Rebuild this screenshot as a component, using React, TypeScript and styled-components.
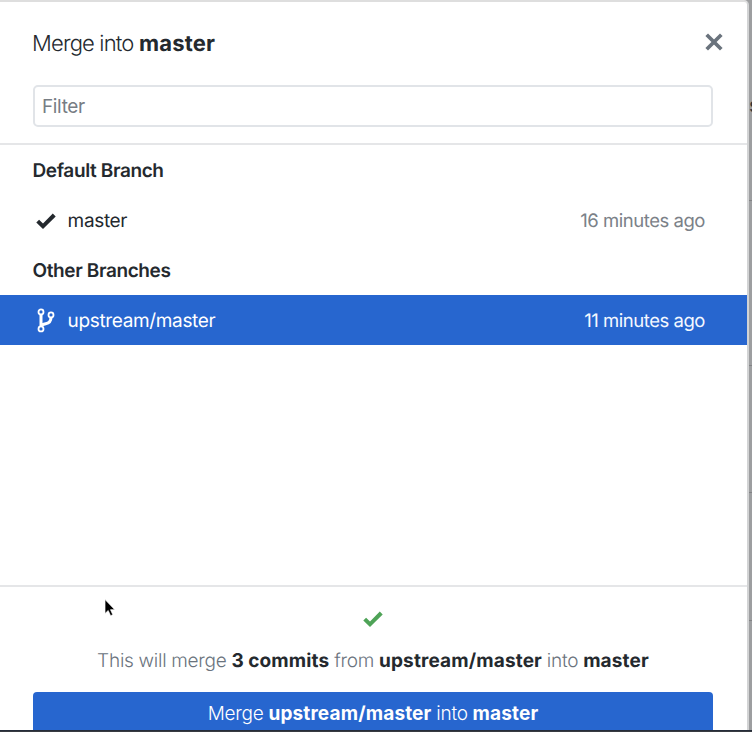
import React from 'react';
import styled, { createGlobalStyle } from 'styled-components';

const Global = createGlobalStyle`
  *, *::before, *::after { box-sizing: border-box; }
  body {
    margin: 0;
    overflow: hidden;
    background: #9d9ea0;
    font-family: Inter, "Liberation Sans", sans-serif;
    font-size: 19px;
    color: #24292e;
    text-rendering: geometricPrecision;
  }
`;

const Screen = styled.div`
  display: flex;
  position: relative;
  width: 752px;
  height: 732px;
  overflow: hidden;
`;

const Dialog = styled.section`
  display: flex;
  flex-direction: column;
  width: 749px;
  height: 732px;
  background: #fff;
  border-top: 2px solid #dedede;
  border-right: 2px solid #d2d3d4;
  border-top-right-radius: 5px;
`;

const Header = styled.header`
  display: flex;
  align-items: center;
  justify-content: space-between;
  height: 83px;
  padding: 0 23px 0 32px;
`;

const Title = styled.h1`
  margin: 0;
  font-size: 22px;
  line-height: 28px;
  font-weight: 300;
  letter-spacing: -0.82px;
  white-space: nowrap;

  strong {
    font-weight: 700;
    letter-spacing: 0.2px;
  }
`;

const CloseButton = styled.button`
  display: flex;
  padding: 0;
  margin-bottom: 3px;
  border: 0;
  background: none;
  color: #6a737d;
`;

const FilterArea = styled.div`
  height: 60px;
  padding: 0 34px 0 33px;
  border-bottom: 2px solid #e5e6e8;
`;

const FilterInput = styled.input`
  display: block;
  width: 100%;
  height: 42px;
  padding: 1px 7px 0;
  border: 2px solid #e1e4e8;
  border-radius: 5px;
  outline: 0;
  background: #fff;
  font: inherit;
  letter-spacing: -0.35px;

  &::placeholder {
    color: #777d84;
    opacity: 1;
  }
`;

const BranchList = styled.div`
  flex: 1;
  min-height: 0;
`;

const GroupHeading = styled.h2`
  margin: 0;
  height: 50px;
  padding: 1px 32.5px 0;
  font-size: 19px;
  line-height: 50px;
  font-weight: 600;
  letter-spacing: -0.38px;
`;

const Branch = styled.div<{ $selected?: boolean }>`
  display: flex;
  align-items: center;
  height: 50px;
  padding: 1px 42px 0 35px;
  background: ${(p) => (p.$selected ? '#2766cf' : 'transparent')};
  color: ${(p) => (p.$selected ? '#fff' : '#24292e')};
`;

const BranchIcon = styled.span`
  display: flex;
  width: 32.6px;
`;

const BranchName = styled.span`
  flex: 1;
  line-height: 50px;
  letter-spacing: -0.35px;
`;

const BranchTime = styled.time<{ $selected?: boolean }>`
  font-size: 18.5px;
  line-height: 50px;
  letter-spacing: -0.46px;
  color: ${(p) => (p.$selected ? '#f4f8ff' : '#7b8188')};
`;

const Footer = styled.footer`
  display: flex;
  flex-direction: column;
  align-items: center;
  height: 147px;
  padding: 0 34px 0 33px;
  border-top: 2px solid #e5e6e8;
`;

const Status = styled.div`
  display: flex;
  align-items: center;
  height: 64px;
  color: #4ea357;
`;

const Phrase = styled.span`
  font-weight: 300;
  letter-spacing: -0.23px;
  word-spacing: -0.3px;
  white-space: pre;

  strong {
    font-weight: 700;
    letter-spacing: 0.15px;
  }
`;

const Summary = styled.p`
  margin: 0 0 21px;
  line-height: 20px;
  color: #6a737d;

  strong { color: #24292e; }
`;

const MergeButton = styled.button`
  flex: 1;
  align-self: stretch;
  padding: 3px 0 0;
  border: 0;
  border-radius: 4px 4px 0 0;
  background: #2766cf;
  color: #fff;
  font: inherit;
  line-height: 30px;
`;

const ScreenEdge = styled.div`
  position: absolute;
  left: 0;
  right: 0;
  bottom: 0;
  height: 2px;
  background: linear-gradient(#1c2535, #414345);
`;

const Backdrop = styled.aside`
  flex: 1;
  display: grid;
  grid-template-rows: 201px 165px 127px 128px 1fr;
  overflow: hidden;
`;

const BackdropRow = styled.div`
  display: flex;
  justify-content: flex-end;
  border-bottom: 1px solid #828385;
`;

const BackdropText = styled.span`
  margin-top: 93px;
  height: 24px;
  line-height: 24px;
  font-size: 20px;
  color: #303236;
`;

const Pointer = styled.svg`
  position: absolute;
  left: 102px;
  top: 597px;
`;

const CheckIcon = () => (
  <svg width="22" height="20" viewBox="0 0 22 20">
    <path d="M1.3 11.5 4.1 8.7 8 12.5 17.8 2.6 20.7 5.4 8 18Z" fill="currentColor" />
  </svg>
);

const BranchGlyph = () => (
  <svg width="22" height="26" viewBox="0 0 22 26" fill="none" stroke="currentColor">
    <circle cx="6" cy="3.9" r="2.5" strokeWidth="1.8" />
    <circle cx="16" cy="6.9" r="2.5" strokeWidth="1.8" />
    <circle cx="6" cy="20.9" r="2.5" strokeWidth="1.8" />
    <path d="M6 6.6v11.6M16 9.6c0 4.5-2.8 5.7-5.3 6.2C8.2 16.3 6.7 16.9 6 18.1" strokeWidth="3" />
  </svg>
);

export default function App() {
  return (
    <>
      <Global />
      <Screen>
        <Dialog>
          <Header>
            <Title>Merge into <strong>master</strong></Title>
            <CloseButton aria-label="Close">
              <svg width="20" height="20" viewBox="0 0 20 20" fill="none" stroke="currentColor" strokeWidth="3.7">
                <path d="M2.7 2.7 17.3 17.3M17.3 2.7 2.7 17.3" />
              </svg>
            </CloseButton>
          </Header>
          <FilterArea><FilterInput placeholder="Filter" /></FilterArea>
          <BranchList>
            <GroupHeading>Default Branch</GroupHeading>
            <Branch>
              <BranchIcon><CheckIcon /></BranchIcon>
              <BranchName>master</BranchName>
              <BranchTime>16 minutes ago</BranchTime>
            </Branch>
            <GroupHeading>Other Branches</GroupHeading>
            <Branch $selected>
              <BranchIcon><BranchGlyph /></BranchIcon>
              <BranchName>upstream/master</BranchName>
              <BranchTime $selected>11 minutes ago</BranchTime>
            </Branch>
          </BranchList>
          <Footer>
            <Status><CheckIcon /></Status>
            <Summary>
              <Phrase>This will merge <strong>3 commits</strong> from <strong>upstream/master</strong> into <strong>master</strong></Phrase>
            </Summary>
            <MergeButton>
              <Phrase>Merge <strong>upstream/master</strong> into <strong>master</strong></Phrase>
            </MergeButton>
          </Footer>
        </Dialog>
        <Backdrop>
          <BackdropRow><BackdropText>s</BackdropText></BackdropRow>
          <BackdropRow />
          <BackdropRow />
          <BackdropRow />
        </Backdrop>
        <Pointer width="16" height="22" viewBox="0 0 16 22">
          <path d="M3 2.5v14l3.2-3 2.4 5.2 2.2-1-2.3-5h4.3Z" fill="#000" stroke="#fff" strokeWidth="0.7" />
        </Pointer>
        <ScreenEdge />
      </Screen>
    </>
  );
}
